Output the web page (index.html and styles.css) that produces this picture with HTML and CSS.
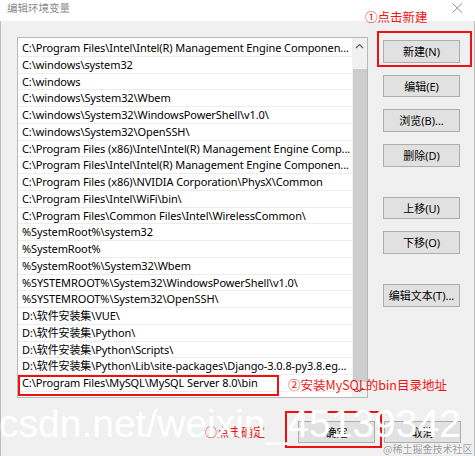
FILE: index.html
```html
<!DOCTYPE html>
<html lang="zh-CN">
<head>
<meta charset="utf-8">
<title>编辑环境变量</title>
<link rel="stylesheet" href="styles.css">
</head>
<body>
<div class="window">
  <div class="titlebar">
    <span class="title">编辑环境变量</span>
    <svg class="close" width="11" height="10" viewBox="0 0 11 10"><path d="M0.5 0.5 L10 9.5 M10 0.5 L0.5 9.5" stroke="#8f8f8f" stroke-width="1" fill="none"/></svg>
  </div>
  <div class="dialog">
    <div class="main">
      <div class="listbox">
        <ul class="rows">
          <li>C:\Program Files\Intel\Intel(R) Management Engine Componen...</li>
          <li>C:\windows\system32</li>
          <li>C:\windows</li>
          <li>C:\windows\System32\Wbem</li>
          <li>C:\windows\System32\WindowsPowerShell\v1.0\</li>
          <li>C:\windows\System32\OpenSSH\</li>
          <li>C:\Program Files (x86)\Intel\Intel(R) Management Engine Comp...</li>
          <li>C:\Program Files\Intel\Intel(R) Management Engine Componen...</li>
          <li>C:\Program Files (x86)\NVIDIA Corporation\PhysX\Common</li>
          <li>C:\Program Files\Intel\WiFi\bin\</li>
          <li>C:\Program Files\Common Files\Intel\WirelessCommon\</li>
          <li>%SystemRoot%\system32</li>
          <li>%SystemRoot%</li>
          <li>%SystemRoot%\System32\Wbem</li>
          <li>%SYSTEMROOT%\System32\WindowsPowerShell\v1.0\</li>
          <li>%SYSTEMROOT%\System32\OpenSSH\</li>
          <li>D:\软件安装集\VUE\</li>
          <li>D:\软件安装集\Python\</li>
          <li>D:\软件安装集\Python\Scripts\</li>
          <li>D:\软件安装集\Python\Lib\site-packages\Django-3.0.8-py3.8.eg...</li>
          <li>C:\Program Files\MySQL\MySQL Server 8.0\bin</li>
        </ul>
        <div class="scrollbar">
          <div class="sb-btn sb-up"><svg width="9" height="6" viewBox="0 0 9 6"><polyline points="1,5 4.5,1.5 8,5" fill="none" stroke="#606060" stroke-width="1.2"/></svg></div>
          <div class="track"><div class="thumb"></div></div>
          <div class="sb-btn sb-down"><svg width="9" height="6" viewBox="0 0 9 6"><polyline points="1,1 4.5,4.5 8,1" fill="none" stroke="#606060" stroke-width="1.2"/></svg></div>
        </div>
      </div>
      <div class="actions">
        <button class="btn">新建(N)</button>
        <button class="btn">编辑(E)</button>
        <button class="btn">浏览(B)...</button>
        <button class="btn">删除(D)</button>
        <button class="btn btn-sep">上移(U)</button>
        <button class="btn">下移(O)</button>
        <button class="btn btn-sep">编辑文本(T)...</button>
      </div>
    </div>
    <div class="footer">
      <button class="btn btn-foot">确定</button>
      <button class="btn btn-foot">取消</button>
    </div>
  </div>

  <div class="mark mark-new"></div>
  <div class="mark mark-row"></div>
  <div class="mark mark-ok"></div>
  <span class="note note-new">①点击新建</span>
  <span class="note note-row">②安装MySQL的bin目录地址</span>
  <span class="note note-ok">①点击确定</span>
  <span class="watermark">csdn.net/weixin_45139342</span>
  <span class="credit">@稀土掘金技术社区</span>
</div>
</body>
</html>
```

FILE: styles.css
```css
* { box-sizing: border-box; }
html, body { margin: 0; padding: 0; }
body {
  width: 475px;
  height: 456px;
  overflow: hidden;
  font-family: "Noto Sans", "Noto Sans CJK SC", sans-serif;
  background: #f0f0f0;
}
.window {
  position: relative;
  width: 475px;
  height: 456px;
  overflow: hidden;
}
.titlebar {
  height: 21px;
  background: #ffffff;
  display: flex;
  justify-content: space-between;
  align-items: flex-start;
  padding: 3px 12px 0 7px;
}
.title {
  font-family: "Noto Sans CJK SC", sans-serif;
  font-size: 10.5px;
  line-height: 10.5px;
  color: #8c8c8c;
}
.close { display: block; }
.dialog {
  height: 435px;
  background: #f0f0f0;
  border-left: 1px solid #bdbdbd;
  border-right: 1px solid #bdbdbd;
  padding: 16px 0 0 16px;
}
.main {
  display: flex;
  gap: 15px;
}
.listbox {
  width: 351px;
  height: 361px;
  background: #ffffff;
  border: 1px solid #b9b9b9;
  display: flex;
}
.rows {
  flex: 1;
  min-width: 0;
  list-style: none;
  margin: 0;
  padding: 2px 0 0 0;
  overflow: hidden;
}
.rows li {
  height: 16.75px;
  line-height: 16.75px;
  font-size: 11px;
  letter-spacing: -0.1px;
  color: #000;
  padding-left: 4px;
  white-space: nowrap;
  overflow: hidden;
  border-bottom: 1px solid #ededed;
}
.scrollbar {
  width: 15px;
  flex: none;
  background: #f0f0f0;
  display: flex;
  flex-direction: column;
}
.sb-btn {
  height: 16px;
  display: flex;
  align-items: center;
  justify-content: center;
}
.sb-down { height: 15px; }
.track {
  flex: 1;
  padding-top: 15px;
  display: flex;
}
.thumb {
  flex: 1;
  margin-left: 1px;
  background: #cdcdcd;
}
.actions {
  width: 77px;
  padding-top: 3px;
  display: flex;
  flex-direction: column;
  gap: 12px;
}
.btn {
  width: 77px;
  height: 22.7px;
  margin: 0;
  padding: 0;
  background: #e1e1e1;
  border: 1px solid #adadad;
  font-family: "Noto Sans", "Noto Sans CJK SC", sans-serif;
  font-size: 11px;
  color: #000;
  line-height: 1;
}
.btn-sep { margin-top: 18px; }
.footer {
  display: flex;
  justify-content: flex-end;
  gap: 9px;
  margin-top: 23px;
  padding-right: 13px;
}
.btn-foot { height: 22px; }

.mark {
  position: absolute;
  border: 2px solid #ee1111;
}
.mark-new { left: 377px; top: 31px; width: 95px; height: 36px; }
.mark-row { left: 18px; top: 375px; width: 261px; height: 21px; }
.mark-ok { left: 285px; top: 411px; width: 97px; height: 37px; }

.note {
  position: absolute;
  font-family: "Noto Sans CJK SC", sans-serif;
  color: #f01414;
  line-height: 1;
  white-space: nowrap;
}
.note-new { left: 365px; top: 11px; font-size: 12.5px; }
.note-row { left: 288px; top: 379px; font-size: 12.5px; }
.note-ok { left: 205px; top: 426px; font-size: 12px; }

.watermark {
  position: absolute;
  left: -1px;
  top: 404px;
  font-family: "Liberation Sans", Arial, sans-serif;
  font-size: 39px;
  line-height: 39px;
  color: #ffffff;
  white-space: nowrap;
}
.credit {
  position: absolute;
  left: 383px;
  top: 444px;
  font-family: "Noto Sans CJK SC", sans-serif;
  font-size: 10px;
  line-height: 10px;
  color: #9a9a9a;
  white-space: nowrap;
  text-shadow: 0 0 1px #fff, 0 0 1px #fff;
}
```
